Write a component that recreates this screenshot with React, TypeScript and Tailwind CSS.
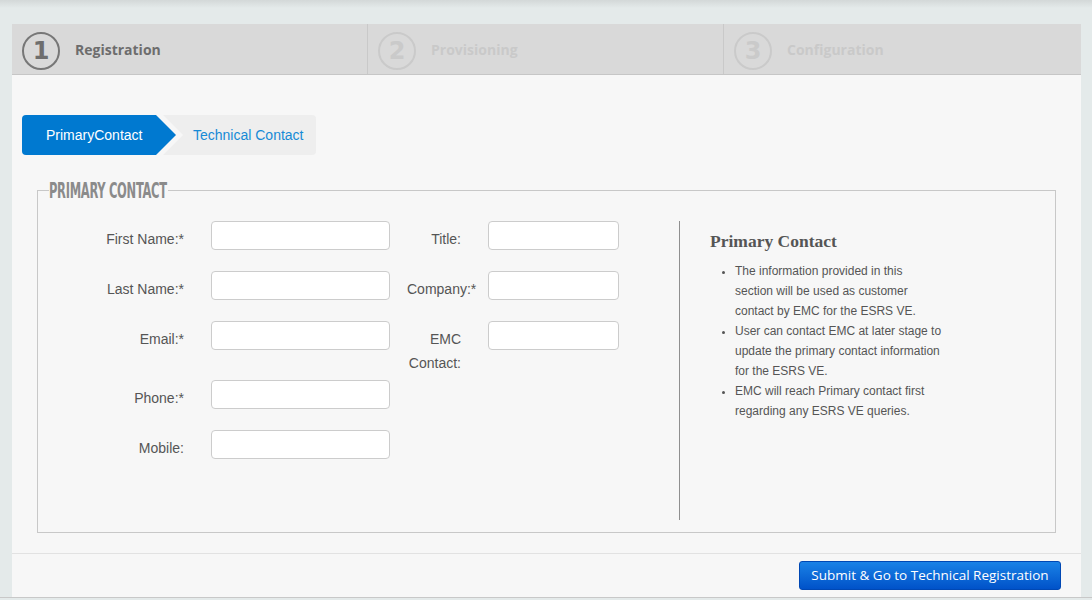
import React from "react";

const sans = "font-['Liberation_Sans',Arial,sans-serif]";

const steps = [
  { n: "1", label: "Registration", active: true },
  { n: "2", label: "Provisioning", active: false },
  { n: "3", label: "Configuration", active: false },
];

const leftRows = [
  { label: "First Name:*", right: { label: "Title:" } },
  { label: "Last Name:*", right: { label: "Company:*" } },
  { label: "Email:*", right: { label: "EMC Contact:" } },
  { label: "Phone:*", right: null },
  { label: "Mobile:", right: null },
];

const inputClass =
  "block h-[29px] rounded-[4px] border border-[#cccccc] bg-white px-2 text-sm outline-none";

function StepBar() {
  return (
    <div className="grid h-[51px] grid-cols-[355px_356px_1fr] border-b border-[#c6c6c6] bg-[#d9d9d9]">
      {steps.map((s, i) => (
        <div
          key={s.n}
          className={`flex items-center pl-[10px] ${i > 0 ? "border-l border-[#c9c9c9]" : ""}`}
        >
          <div
            className={`mt-[3px] flex h-[38px] w-[38px] items-center justify-center rounded-full border-2 font-['DejaVu_Sans',sans-serif] text-[24px] font-bold leading-none ${
              s.active ? "border-[#777777] text-[#6e6e6e]" : "border-[#cacaca] text-[#cacaca]"
            }`}
          >
            {s.n}
          </div>
          <span
            className={`ml-[15px] mt-[1px] font-['Open_Sans',sans-serif] text-sm font-bold ${
              s.active ? "text-[#6d6d6d]" : "text-[#c9c9c9]"
            }`}
          >
            {s.label}
          </span>
        </div>
      ))}
    </div>
  );
}

function SubTabs() {
  return (
    <div className={`flex h-10 pl-[10px] ${sans} text-sm`}>
      <div className="relative z-10 flex h-10 w-[154px] items-center rounded-l-[4px] bg-[#0079d0] pl-[24px] text-white [clip-path:polygon(0_0,134px_0,154px_50%,134px_100%,0_100%)]">
        PrimaryContact
      </div>
      <div className="-ml-[13px] flex h-10 w-[153px] items-center rounded-r-[4px] bg-[#eeeeee] pl-[30px] text-[#168ad6] [clip-path:polygon(0_0,100%_0,100%_100%,0_100%,20px_50%)]">
        Technical Contact
      </div>
    </div>
  );
}

function ContactForm() {
  return (
    <div className={`grid w-[630px] grid-cols-[162px_179px_17px_81px_131px] content-start ${sans} text-sm text-[#555555]`}>
      {leftRows.map((row) => (
        <React.Fragment key={row.label}>
          <div className="pr-[27px] pt-[6px] pb-[5px] text-right leading-6">{row.label}</div>
          <div className="pb-[21px]">
            <input className={`${inputClass} w-[179px]`} />
          </div>
          <div />
          {row.right ? (
            <>
              <div className="w-[54px] pt-[6px] pb-[5px] text-right leading-6">{row.right.label}</div>
              <div className="pb-[21px]">
                <input className={`${inputClass} w-[131px]`} />
              </div>
            </>
          ) : (
            <>
              <div />
              <div />
            </>
          )}
        </React.Fragment>
      ))}
    </div>
  );
}

function InfoPanel() {
  return (
    <div className="pl-[30px] text-[#555555]">
      <h3 className="mt-[8px] font-['Liberation_Serif',serif] text-[17.5px] font-bold leading-6">
        Primary Contact
      </h3>
      <ul className={`mt-[8px] w-[232px] list-disc pl-[25px] ${sans} text-xs leading-5 marker:text-[11px]`}>
        <li>The information provided in this section will be used as customer contact by EMC for the ESRS VE.</li>
        <li>User can contact EMC at later stage to update the primary contact information for the ESRS VE.</li>
        <li>EMC will reach Primary contact first regarding any ESRS VE queries.</li>
      </ul>
    </div>
  );
}

export default function App() {
  return (
    <div className="min-h-[600px] bg-[#e4eaea] bg-[linear-gradient(#d3d8d8,#e4eaea_8px,#e4eaea)] pt-[24px]">
      <div className="ml-[12px] w-[1069px] bg-[#f7f7f7]">
        <StepBar />
        <div className="pt-[40px]">
          <SubTabs />
        </div>
        <fieldset className="mx-[25px] mt-[25px] border border-[#c8c8c8] px-[11px] pb-[12px]">
          <legend className="h-5 w-[119px] overflow-visible whitespace-nowrap">
            <span className="inline-block origin-left scale-x-[0.58] font-['DejaVu_Sans_Condensed','DejaVu_Sans',sans-serif] text-[22px] font-bold leading-5 tracking-[-0.5px] text-[#8b8b8b]">
              PRIMARY CONTACT
            </span>
          </legend>
          <div className="flex h-[320px] pt-[21px]">
            <ContactForm />
            <div className="border-l border-[#8f8f8f]">
              <InfoPanel />
            </div>
          </div>
        </fieldset>
        <div className="mt-[20px] flex justify-end border-t border-[#e2e2e2] pr-[20px] pt-[7px] pb-[7px]">
          <button className="h-[29px] w-[262px] rounded-[3px] border border-[#0048b4] bg-[linear-gradient(#1a82e6,#0052c9)] font-['Open_Sans',sans-serif] text-[13.5px] text-white">
            Submit &amp; Go to Technical Registration
          </button>
        </div>
      </div>
      <div className="h-px bg-[#c8c8c8]" />
    </div>
  );
}
